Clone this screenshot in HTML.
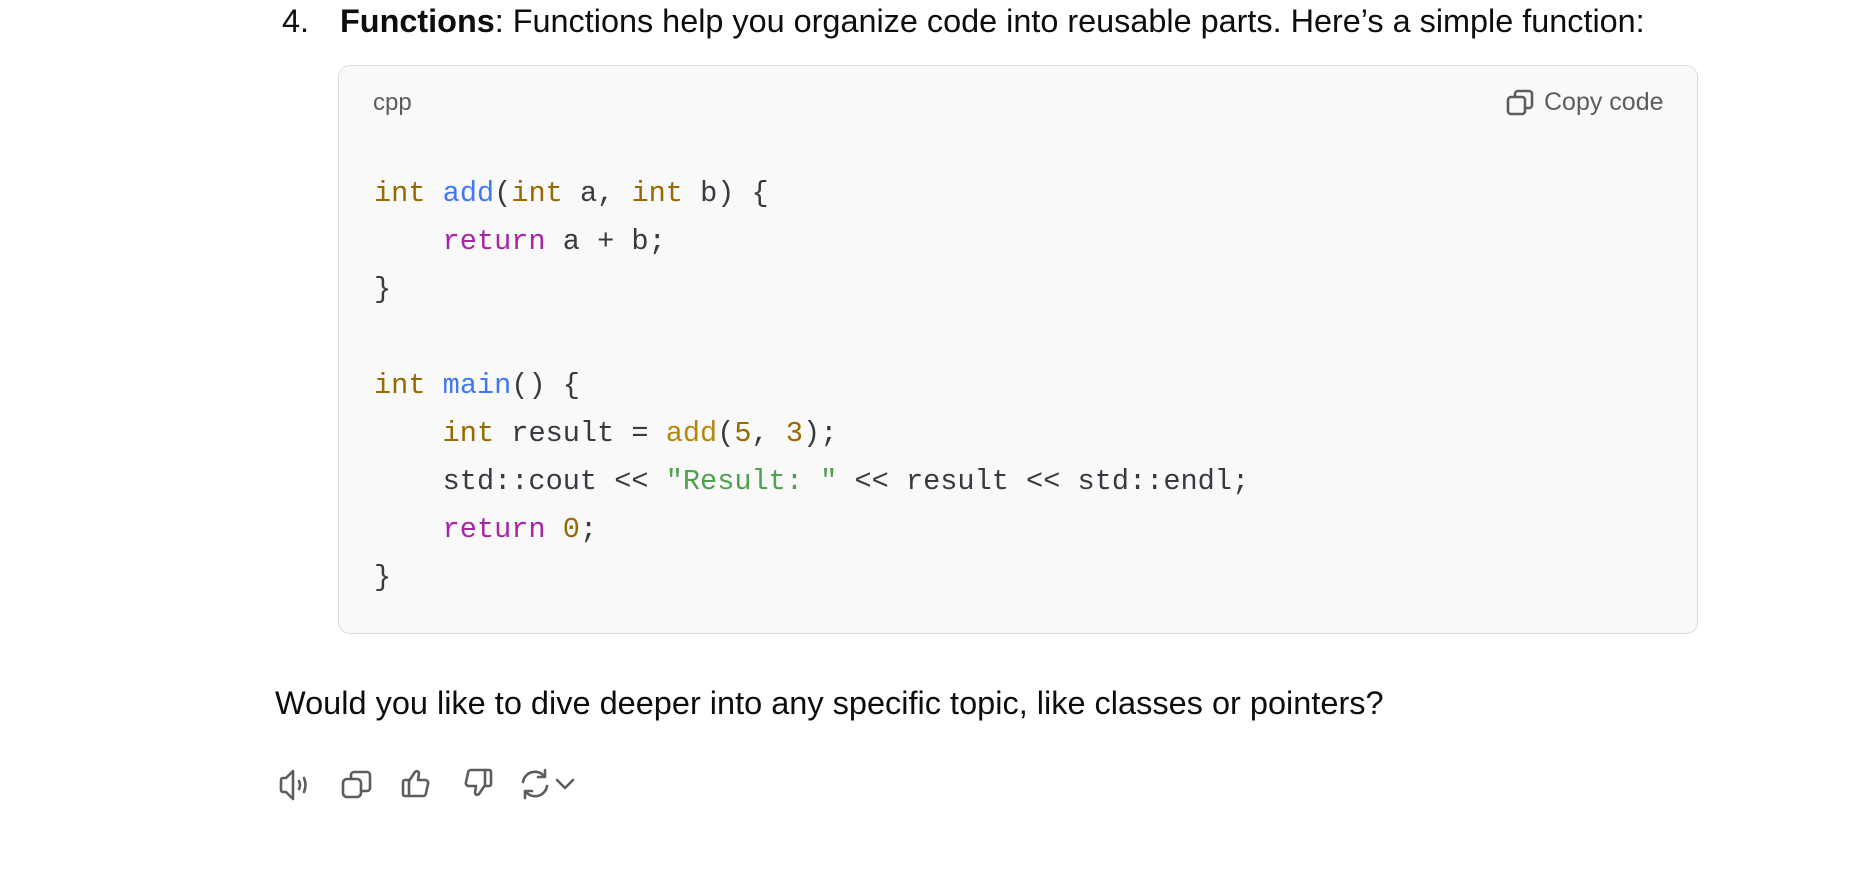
<!DOCTYPE html>
<html><head><meta charset="utf-8"><style>
body{margin:0;width:1868px;height:880px;background:#fff;position:relative;font-family:"Liberation Sans",sans-serif;color:#0d0d0d;overflow:hidden}
.abs{position:absolute;white-space:pre}
.h{font-size:32.4px;top:2px;line-height:38px}
.box{position:absolute;left:338px;top:65px;width:1360px;height:569px;background:#f9f9f9;border:1px solid #ddd;border-radius:12px;box-sizing:border-box}
.code{font-family:"Liberation Mono",monospace;font-size:28.6px;line-height:48px;color:#383a42;left:374px;top:170px}
.t{color:#986801}.f{color:#4078f2}.k{color:#a626a4}.s{color:#50a14f}.n{color:#b8860b}
svg{position:absolute;fill:none;stroke:#5d5d5d;stroke-width:2.6;stroke-linecap:round;stroke-linejoin:round}
</style></head><body>
<div class="abs h" style="left:282px">4.</div>
<div class="abs h" style="left:340px"><b>Functions</b>: Functions help you organize code into reusable parts. Here’s a simple function:</div>
<div class="box"></div>
<div class="abs" style="left:373px;top:89px;font-size:24px;color:#5d5d5d">cpp</div>
<svg style="left:1505px;top:88px" width="30" height="30" viewBox="0 0 30 30"><rect x="3" y="9" width="17" height="17" rx="3"/><path d="M10 9V6a3 3 0 0 1 3-3h11a3 3 0 0 1 3 3v11a3 3 0 0 1-3 3h-4"/></svg>
<div class="abs" style="left:1544px;top:88px;font-size:25px;color:#5d5d5d">Copy code</div>
<div class="abs code"><span class="t">int</span> <span class="f">add</span>(<span class="t">int</span> a, <span class="t">int</span> b) {
    <span class="k">return</span> a + b;
}

<span class="t">int</span> <span class="f">main</span>() {
    <span class="t">int</span> result = <span class="n">add</span>(<span class="t">5</span>, <span class="t">3</span>);
    std::cout &lt;&lt; <span class="s">"Result: "</span> &lt;&lt; result &lt;&lt; std::endl;
    <span class="k">return</span> <span class="t">0</span>;
}</div>
<div class="abs" style="left:275px;top:684px;font-size:32.5px;line-height:38px">Would you like to dive deeper into any specific topic, like classes or pointers?</div>
<svg style="left:277px;top:767px" width="36" height="36" viewBox="0 0 36 36"><path d="M4 13v10a2 2 0 0 0 2 2h3l7 7V4l-7 7H6a2 2 0 0 0-2 2z"/><path d="M22 14q2 4 0 8M27 11q3 7 0 14"/></svg>
<svg style="left:340px;top:768px" width="34" height="34" viewBox="0 0 34 34"><rect x="3" y="11" width="18" height="18" rx="4"/><path d="M11 11V7a3 3 0 0 1 3-3h13a3 3 0 0 1 3 3v13a3 3 0 0 1-3 3h-6"/></svg>
<svg style="left:400px;top:766px" width="34" height="34" viewBox="0 0 34 34"><path d="M3 16a2 2 0 0 1 2-2h4v16H5a2 2 0 0 1-2-2z"/><path d="M9 15l6-9q3-2 4 1l-1 7h7a3 3 0 0 1 3 4l-2 9a3 3 0 0 1-3 3H9"/></svg>
<svg style="left:460px;top:766px" width="34" height="34" viewBox="0 0 34 34"><path d="M31 18a2 2 0 0 1-2 2h-4V4h4a2 2 0 0 1 2 2z"/><path d="M25 19l-6 9q-3 2-4-1l1-7H9a3 3 0 0 1-3-4l2-9a3 3 0 0 1 3-3h14"/></svg>
<svg style="left:518px;top:767px" width="34" height="34" viewBox="0 0 34 34"><path d="M5 15a12 12 0 0 1 21-6M29 19a12 12 0 0 1-21 6"/><path d="M27 3v7h-7M7 31v-7h7"/></svg>
<svg style="left:554px;top:776px" width="22" height="16" viewBox="0 0 22 16"><path d="M3 4l8 8 8-8"/></svg>
</body></html>
